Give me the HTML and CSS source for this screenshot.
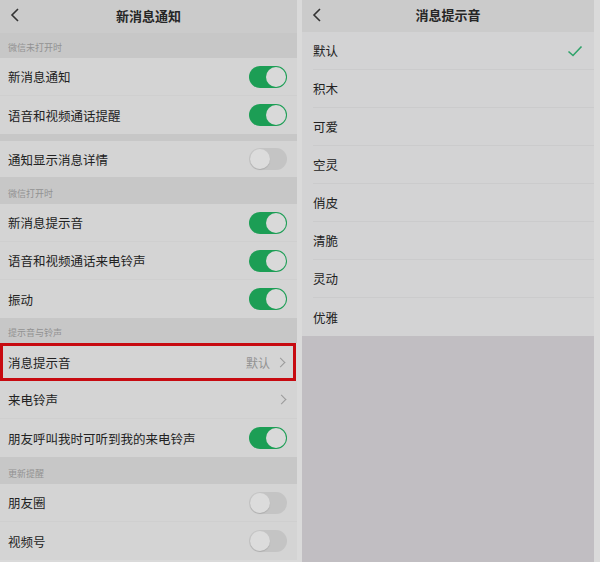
FILE: index.html
```html
<!DOCTYPE html>
<html lang="zh-CN">
<head>
  <meta charset="UTF-8">
  <meta name="viewport" content="width=device-width, initial-scale=1.0">
  <title>新消息通知</title>
  <link rel="stylesheet" href="styles.css">
</head>
<body>
  <div class="screens">
    <div class="panel left">
      <div class="topbar">
        <span class="back"><svg width="10" height="14" viewBox="0 0 10 14"><path d="M8 1 L2 7 L8 13" fill="none" stroke="#333" stroke-width="1.6"/></svg></span>
        <span class="title">新消息通知</span>
      </div>

      <div class="section">微信未打开时</div>
      <div class="row"><span>新消息通知</span><i class="switch on"></i></div>
      <div class="row last"><span>语音和视频通话提醒</span><i class="switch on"></i></div>
      <div class="spacer"></div>
      <div class="row last short"><span>通知显示消息详情</span><i class="switch"></i></div>

      <div class="section tall">微信打开时</div>
      <div class="row"><span>新消息提示音</span><i class="switch on"></i></div>
      <div class="row"><span>语音和视频通话来电铃声</span><i class="switch on"></i></div>
      <div class="row last"><span>振动</span><i class="switch on"></i></div>

      <div class="section">提示音与铃声</div>
      <div class="row marked"><span>消息提示音</span><span class="value">默认<b class="arrow"></b></span></div>
      <div class="row"><span>来电铃声</span><span class="value"><b class="arrow"></b></span></div>
      <div class="row last"><span>朋友呼叫我时可听到我的来电铃声</span><i class="switch on"></i></div>

      <div class="section tall">更新提醒</div>
      <div class="row"><span>朋友圈</span><i class="switch"></i></div>
      <div class="row last"><span>视频号</span><i class="switch"></i></div>
    </div>

    <div class="panel right">
      <div class="topbar">
        <span class="back"><svg width="10" height="14" viewBox="0 0 10 14"><path d="M8 1 L2 7 L8 13" fill="none" stroke="#333" stroke-width="1.6"/></svg></span>
        <span class="title">消息提示音</span>
      </div>
      <div class="list">
        <div class="item"><span>默认</span><svg class="check" width="16" height="12" viewBox="0 0 16 12"><path d="M1.5 6.5 L6 10.5 L14.5 1.5" fill="none" stroke="#2fa36a" stroke-width="1.6"/></svg></div>
        <div class="item"><span>积木</span></div>
        <div class="item"><span>可爱</span></div>
        <div class="item"><span>空灵</span></div>
        <div class="item"><span>俏皮</span></div>
        <div class="item"><span>清脆</span></div>
        <div class="item"><span>灵动</span></div>
        <div class="item last"><span>优雅</span></div>
      </div>
      <div class="empty"></div>
    </div>
  </div>
</body>
</html>
```

FILE: styles.css
```css
:root {
  --gap: #dadada;
  --bar: #cbcbcb;
  --row: #d4d4d4;
  --section: #c7c7c7;
  --text: #222;
  --muted: #929292;
  --green: #1c9e55;
}
body {
  margin: 0;
  width: 600px;
  height: 562px;
  overflow: hidden;
  background: var(--gap);
  font-family: "Noto Sans CJK SC", "Noto Sans", sans-serif;
  color: var(--text);
}
.screens {
  display: flex;
  gap: 5px;
  height: 562px;
}
.panel {
  display: flex;
  flex-direction: column;
}
.left {
  width: 297px;
}
.right {
  width: 292px;
}
.topbar {
  height: 33px;
  flex: none;
  background: var(--bar);
  position: relative;
  display: flex;
  align-items: center;
  justify-content: center;
  padding-bottom: 3px;
  box-sizing: border-box;
}
.right .topbar {
  height: 32px;
}
.back {
  position: absolute;
  left: 10px;
  top: 8px;
  display: flex;
}
.title {
  font-size: 13px;
  font-weight: 700;
  color: #262626;
}
.section {
  height: 25px;
  flex: none;
  background: var(--section);
  font-size: 9px;
  color: var(--muted);
  padding-left: 8px;
  display: flex;
  align-items: flex-end;
  padding-bottom: 4px;
  box-sizing: border-box;
}
.section.tall {
  height: 27px;
}
.spacer {
  height: 7px;
  flex: none;
  background: var(--section);
}
.row {
  height: 38px;
  flex: none;
  background: var(--row);
  display: flex;
  align-items: center;
  justify-content: space-between;
  padding: 0 10px 0 8px;
  font-size: 12.5px;
  box-sizing: border-box;
  border-bottom: 1px solid #cfcfcf;
}
.row.last {
  border-bottom: none;
}
.row.short {
  height: 36px;
}
.row.marked {
  border: 3px solid #c70a10;
  padding-left: 5px;
  padding-right: 7px;
  margin-right: 1px;
}
.value {
  display: flex;
  align-items: center;
  gap: 7px;
  color: var(--muted);
  font-size: 12px;
  padding-right: 2px;
}
.arrow {
  width: 6px;
  height: 6px;
  border-top: 1.2px solid #9a9a9a;
  border-right: 1.2px solid #9a9a9a;
  transform: rotate(45deg);
}
.switch {
  width: 38px;
  height: 22px;
  border-radius: 11px;
  background: #c4c4c4;
  position: relative;
  flex: none;
}
.switch::after {
  content: "";
  position: absolute;
  left: 1px;
  top: 1px;
  width: 20px;
  height: 20px;
  border-radius: 50%;
  background: #dcdcdc;
  box-shadow: 0 1px 1px rgba(0, 0, 0, 0.12);
}
.switch.on {
  background: var(--green);
}
.switch.on::after {
  left: 17px;
  background: #d9d9d9;
  box-shadow: none;
}
.list {
  background: #d3d3d4;
  flex: none;
}
.item {
  height: 38px;
  margin-left: 11px;
  padding-right: 11px;
  display: flex;
  align-items: center;
  justify-content: space-between;
  font-size: 12.5px;
  border-bottom: 1px solid #cbcbcc;
  box-sizing: border-box;
}
.item.last {
  border-bottom: none;
}
.empty {
  flex: 1;
  background: #c1bec2;
}
```
